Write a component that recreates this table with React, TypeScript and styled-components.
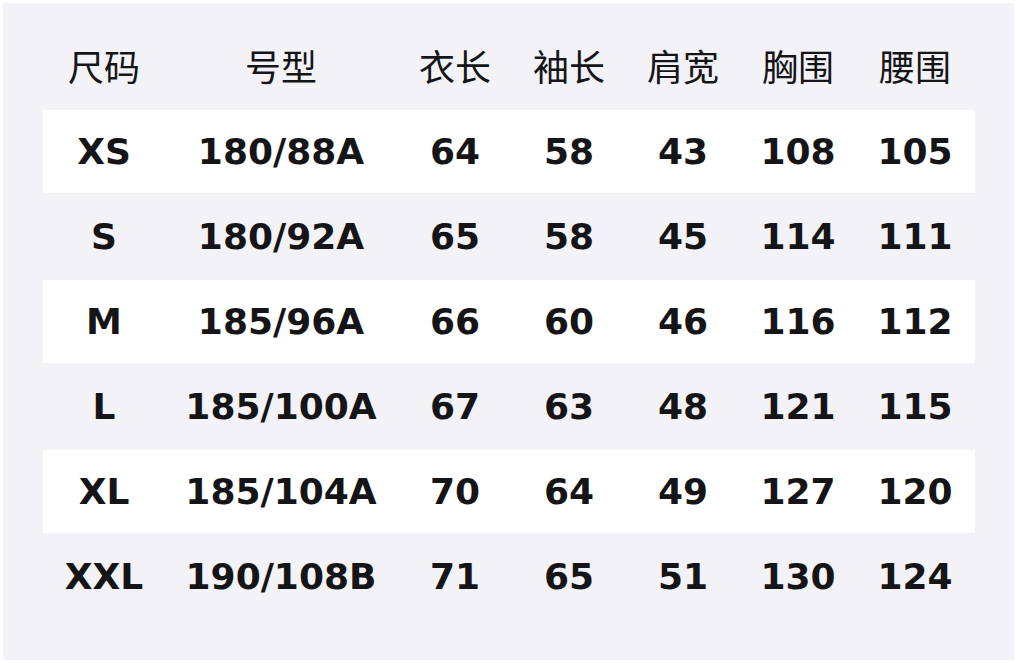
import { FC } from "react";
import styled, { createGlobalStyle } from "styled-components";

const GlobalStyle = createGlobalStyle`
  html, body {
    margin: 0;
    padding: 0;
    background: #ffffff;
  }
  body {
    padding: 3px 4px 3px 3px;
  }
`;

const columns = ["尺码", "号型", "衣长", "袖长", "肩宽", "胸围", "腰围"];

const rows: string[][] = [
    ["XS", "180/88A", "64", "58", "43", "108", "105"],
    ["S", "180/92A", "65", "58", "45", "114", "111"],
    ["M", "185/96A", "66", "60", "46", "116", "112"],
    ["L", "185/100A", "67", "63", "48", "121", "115"],
    ["XL", "185/104A", "70", "64", "49", "127", "120"],
    ["XXL", "190/108B", "71", "65", "51", "130", "124"],
];

const Panel = styled.section`
  width: 1011px;
  height: 657px;
  box-sizing: border-box;
  background: #f2f2f7;
  padding: 22px 39px 40px 40px;
`;

const Grid = styled.div`
  display: grid;
  grid-template-columns: 122px 232px 116px 112px 116px 114px 120px;
`;

const Row = styled.div<{ $striped?: boolean; $header?: boolean }>`
  display: contents;

  & > div {
    height: ${(p) => (p.$header ? "85px" : "83px")};
    margin-bottom: ${(p) => (p.$header ? "0" : "2px")};
    padding-bottom: ${(p) => (p.$header ? "6px" : "0")};
    background: ${(p) => (p.$striped ? "#ffffff" : "transparent")};
    font-family: ${(p) =>
        p.$header
            ? `"Noto Sans CJK SC", "Noto Sans", sans-serif`
            : `"DejaVu Sans", "Noto Sans", sans-serif`};
    font-weight: ${(p) => (p.$header ? 400 : 700)};
  }
`;

const Cell = styled.div`
  display: flex;
  align-items: center;
  justify-content: center;
  box-sizing: border-box;
  font-size: 36px;
  color: #151517;
  white-space: nowrap;
`;

const SizeTable: FC = () => {
    return (
        <Panel>
            <Grid>
                <Row $header>
                    {columns.map((c) => (
                        <Cell key={c}>{c}</Cell>
                    ))}
                </Row>
                {rows.map((r, i) => (
                    <Row key={r[0]} $striped={i % 2 === 0}>
                        {r.map((v, j) => (
                            <Cell key={j}>{v}</Cell>
                        ))}
                    </Row>
                ))}
            </Grid>
        </Panel>
    );
};

export default function App() {
    return (
        <>
            <GlobalStyle />
            <SizeTable />
        </>
    );
}
